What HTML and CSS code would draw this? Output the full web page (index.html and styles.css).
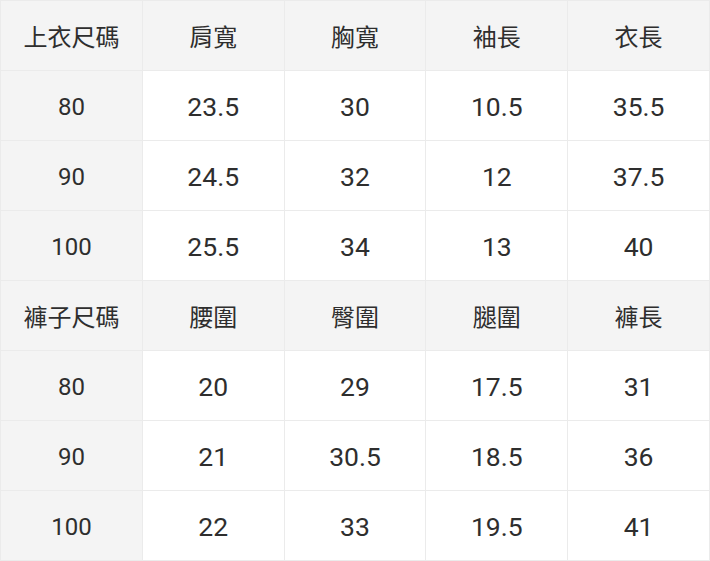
FILE: index.html
```html
<!DOCTYPE html>
<html lang="zh-Hant">
<head>
<meta charset="utf-8">
<link rel="stylesheet" href="styles.css">
</head>
<body>
<table class="size-table">
  <tbody>
    <tr class="head"><th>上衣尺碼</th><th>肩寬</th><th>胸寬</th><th>袖長</th><th>衣長</th></tr>
    <tr><th>80</th><td>23.5</td><td>30</td><td>10.5</td><td>35.5</td></tr>
    <tr><th>90</th><td>24.5</td><td>32</td><td>12</td><td>37.5</td></tr>
    <tr><th>100</th><td>25.5</td><td>34</td><td>13</td><td>40</td></tr>
    <tr class="head"><th>褲子尺碼</th><th>腰圍</th><th>臀圍</th><th>腿圍</th><th>褲長</th></tr>
    <tr><th>80</th><td>20</td><td>29</td><td>17.5</td><td>31</td></tr>
    <tr><th>90</th><td>21</td><td>30.5</td><td>18.5</td><td>36</td></tr>
    <tr><th>100</th><td>22</td><td>33</td><td>19.5</td><td>41</td></tr>
  </tbody>
</table>
</body>
</html>
```
FILE: styles.css
```css
html, body {
  margin: 0;
  padding: 0;
  background: #ffffff;
}
.size-table {
  width: 710px;
  border-collapse: collapse;
  table-layout: fixed;
  font-family: Roboto, "Noto Sans CJK TC", sans-serif;
  color: #2e2e2e;
}
.size-table th,
.size-table td {
  height: 69px;
  padding: 0;
  border: 1px solid #ebebeb;
  text-align: center;
  vertical-align: middle;
  font-weight: 400;
}
.size-table th {
  background: #f4f4f4;
  font-size: 24px;
  height: 67px;
  padding-top: 2px;
}
.size-table td {
  font-size: 26.5px;
  height: 67px;
  padding-top: 2px;
}
.size-table .head th {
  font-size: 24px;
  height: 69px;
  padding-top: 0;
}
```
